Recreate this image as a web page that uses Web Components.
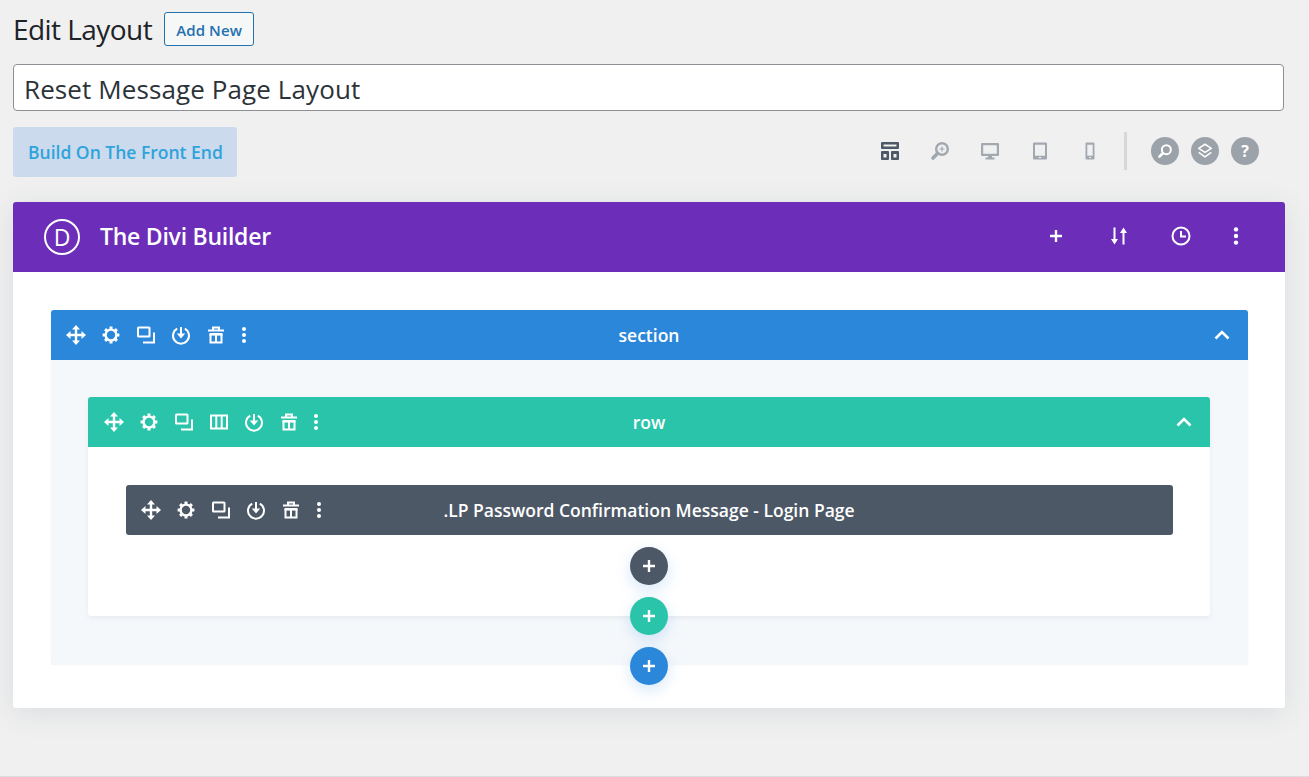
<!DOCTYPE html>
<html>
<head>
<meta charset="utf-8">
<title>Edit Layout</title>
<style>
  html, body { margin: 0; height: 100%; }
  body { background: #f0f0f0; font-family: "Open Sans", "Noto Sans", sans-serif; overflow: hidden; }
</style>
</head>
<body>
<edit-page>
  <edit-title slot="title" label="Edit Layout" action="Add New"></edit-title>
  <title-input slot="title-input" value="Reset Message Page Layout"></title-input>
  <build-toolbar slot="toolbar"></build-toolbar>
  <divi-builder slot="builder">
    <divi-bar kind="section" label="section" icons="move gear copy save trash dots">
      <divi-bar kind="row" label="row" icons="move gear copy cols save trash dots">
        <divi-bar kind="module" label=".LP Password Confirmation Message - Login Page" icons="move gear copy save trash dots"></divi-bar>
        <add-round color="#4c5866"></add-round>
      </divi-bar>
    </divi-bar>
  </divi-builder>
</edit-page>

<script>
const stroke = 'fill="none" stroke="currentColor"';
const ICONS = {
  move: `<g ${stroke} stroke-width="2.400"><path d="M10 3v14M3 10h14"/></g><path fill="currentColor" d="M10 0l4 4.500H6zM10 20l4-4.500H6zM0 10l4.500-4v8zM20 10l-4.500-4v8z"/>`,
  gear: `<g ${stroke}><circle cx="10" cy="10" r="5.400" stroke-width="2.400"/><path stroke-width="3" d="M10 1.600v3M10 15.400v3M1.600 10h3M15.400 10h3M4.100 4.100l2.100 2.100M13.800 13.800l2.100 2.100M4.100 15.900l2.100-2.100M13.800 6.200l2.100-2.100"/></g>`,
  copy: `<g ${stroke} stroke-width="2"><rect x="2" y="2.500" width="11.500" height="9" rx=".5"/><path d="M18 7.500v10H7"/></g>`,
  save: `<g ${stroke} stroke-width="2"><path d="M6.200 3.600a8 8 0 1 0 7.600 0"/><path d="M10 2v8"/></g><path fill="currentColor" d="M5.800 8.600h8.400L10 13.400z"/>`,
  trash: `<g ${stroke} stroke-width="2"><path d="M2 5.500h16M7 4.500V2.500h6v2"/><path stroke-width="2.600" d="M3.500 9.300h13"/><path d="M4.500 9v8.500h11V9M10 10v7"/></g>`,
  dots: `<g fill="currentColor"><circle cx="10" cy="4" r="2"/><circle cx="10" cy="10" r="2"/><circle cx="10" cy="16" r="2"/></g>`,
  cols: `<g ${stroke} stroke-width="2"><rect x="2" y="3.500" width="16" height="13"/><path d="M7.300 3.500v13M12.700 3.500v13"/></g>`,
  plus: `<path ${stroke} stroke-width="2.400" d="M10 4v12M4 10h12"/>`,
  chevron: `<path ${stroke} stroke-width="2.600" d="M3.500 13.500L10 7l6.500 6.500"/>`,
  sort: `<g ${stroke} stroke-width="2"><path d="M5.500 1.500v13M14.500 5.500v13"/></g><path fill="currentColor" d="M2 13h7l-3.500 5.500zM11 7h7l-3.500-5.500z"/>`,
  clock: `<g ${stroke} stroke-width="2"><circle cx="10" cy="10" r="8.500"/><path d="M10 5v5.500h5"/></g>`,
  layout: `<path fill="currentColor" fill-rule="evenodd" d="M1 2a1 1 0 0 1 1-1h16a1 1 0 0 1 1 1v5a1 1 0 0 1-1 1H2a1 1 0 0 1-1-1zM3.500 3.500v2h13v-2zM1 11a1 1 0 0 1 1-1h6a1 1 0 0 1 1 1v7a1 1 0 0 1-1 1H2a1 1 0 0 1-1-1zM3.500 13v3.500h3V13zM11 11a1 1 0 0 1 1-1h6a1 1 0 0 1 1 1v7a1 1 0 0 1-1 1h-6a1 1 0 0 1-1-1zM13.500 13v3.500h3V13z"/>`,
  zoom: `<g ${stroke}><circle cx="12" cy="8" r="5.800" stroke-width="2.400"/><path stroke-width="3.600" stroke-linecap="round" d="M7.500 12.500l-4.500 4.500"/><path stroke-width="1.200" d="M12 5.500v5M9.500 8h5"/></g>`,
  desktop: `<path fill="currentColor" fill-rule="evenodd" d="M1 3a1 1 0 0 1 1-1h16a1 1 0 0 1 1 1v11a1 1 0 0 1-1 1h-6v1.500h2.500V18.500h-9V16.500H8V15H2a1 1 0 0 1-1-1zM3.200 4.200v8.600h13.600V4.200z"/>`,
  tablet: `<path fill="currentColor" fill-rule="evenodd" d="M3 2.500a1 1 0 0 1 1-1h12a1 1 0 0 1 1 1v15a1 1 0 0 1-1 1H4a1 1 0 0 1-1-1zM5 3.700v11.100h10V3.700zM8.700 16h2.600v1H8.700z"/>`,
  phone: `<path fill="currentColor" fill-rule="evenodd" d="M5.500 2.500a1 1 0 0 1 1-1h7a1 1 0 0 1 1 1v15a1 1 0 0 1-1 1h-7a1 1 0 0 1-1-1zM7.300 3.700v11.100h5.400V3.700zM9 16h2v1H9z"/>`,
  search: `<g ${stroke}><circle cx="11.500" cy="8.500" r="5" stroke-width="2.200"/><path stroke-width="3" stroke-linecap="round" d="M7.500 12.500L3.800 16.200"/></g>`,
  layers: `<g ${stroke} stroke-width="1.700" stroke-linejoin="round"><path d="M10 2.500l7 4.500-7 4.500-7-4.500z"/><path d="M3 11.500l7 5 7-5"/></g>`
};

class DiviIcon extends HTMLElement {
  connectedCallback() {
    const size = this.getAttribute('size') || 20;
    const root = this.shadowRoot || this.attachShadow({mode: 'open'});
    root.innerHTML = `
      <style>
        :host { display: block; width: ${size}px; height: ${size}px; line-height: 0; }
        svg { width: 100%; height: 100%; display: block; }
      </style>
      <svg viewBox="0 0 20 20">${ICONS[this.getAttribute('name')]}</svg>`;
  }
}
customElements.define('divi-icon', DiviIcon);

class EditPage extends HTMLElement {
  constructor() {
    super();
    this.attachShadow({mode: 'open'}).innerHTML = `
      <style>
        :host {
          display: flex;
          flex-direction: column;
          box-sizing: border-box;
          height: 777px;
          padding: 12px 24px 0 13px;
          border-bottom: 1px solid #dcdcde;
        }
        ::slotted([slot=title]) { margin-bottom: 18px; }
        ::slotted([slot=title-input]) { margin-bottom: 16px; margin-right: 1px; }
        ::slotted([slot=toolbar]) { margin-bottom: 25px; }
      </style>
      <slot name="title"></slot>
      <slot name="title-input"></slot>
      <slot name="toolbar"></slot>
      <slot name="builder"></slot>`;
  }
}
customElements.define('edit-page', EditPage);

class EditTitle extends HTMLElement {
  constructor() {
    super();
    this.attachShadow({mode: 'open'}).innerHTML = `
      <style>
        :host { display: flex; align-items: center; gap: 11.500px; height: 34px; color: #1d2327; }
        h1 { margin: 0; font: 400 28px/36px "Open Sans", sans-serif; letter-spacing: -.55px; }
        a {
          box-sizing: border-box;
          display: block;
          height: 34px;
          padding: 0 11.500px;
          border: 1px solid #2271b1;
          border-radius: 3px;
          background: #f6f7f7;
          color: #2271b1;
          font: 600 15px/34px "Open Sans", sans-serif;
          letter-spacing: .1px;
        }
      </style>
      <h1>${this.getAttribute('label')}</h1>
      <a>${this.getAttribute('action')}</a>`;
  }
}
customElements.define('edit-title', EditTitle);

class TitleInput extends HTMLElement {
  constructor() {
    super();
    this.attachShadow({mode: 'open'}).innerHTML = `
      <style>
        :host {
          display: block;
          box-sizing: border-box;
          height: 47px;
          padding: 0 10px;
          background: #fff;
          border: 1px solid #8c8f94;
          border-radius: 4px;
          color: #2c3338;
          font: 400 26px/49px "Open Sans", sans-serif;
          letter-spacing: .1px;
        }
      </style>
      ${this.getAttribute('value')}`;
  }
}
customElements.define('title-input', TitleInput);

class BuildToolbar extends HTMLElement {
  constructor() {
    super();
    const icon = (n, c, s) => `<span class="slot" style="color:${c}"><divi-icon name="${n}" size="${s || 20}"></divi-icon></span>`;
    const round = (n, c) => `<span class="round">${c ? `<b>${c}</b>` : `<divi-icon name="${n}" size="18"></divi-icon>`}</span>`;
    this.attachShadow({mode: 'open'}).innerHTML = `
      <style>
        :host { display: flex; align-items: center; height: 50px; }
        .front {
          display: block;
          box-sizing: border-box;
          width: 224px;
          height: 50px;
          padding-left: 15px;
          background: #cbdaec;
          border-radius: 3px;
          color: #2ea3dc;
          font: 600 17.500px/51px "Open Sans", sans-serif;
        }
        .tools { display: flex; align-items: center; margin-left: auto; margin-bottom: 2px; padding-right: 26px; }
        .slot { display: block; width: 50px; display: flex; justify-content: center; }
        .sep { width: 3px; height: 38px; background: #d5d7d9; margin: 0 24px 0 9px; }
        .round {
          display: flex;
          align-items: center;
          justify-content: center;
          width: 28px;
          height: 28px;
          border-radius: 50%;
          background: #9ba2aa;
          color: #fff;
          margin-right: 12px;
        }
        .round:last-child { margin-right: 0; }
        b { font: 700 16px/28px "Open Sans", sans-serif; }
      </style>
      <a class="front">Build On The Front End</a>
      <div class="tools">
        ${icon('layout', '#4c5866')}${icon('zoom', '#a2a8b0')}${icon('desktop', '#a2a8b0')}${icon('tablet', '#a2a8b0')}${icon('phone', '#a2a8b0')}
        <span class="sep"></span>
        ${round('search')}${round('layers')}${round('', '?')}
      </div>`;
  }
}
customElements.define('build-toolbar', BuildToolbar);

class DiviBuilder extends HTMLElement {
  constructor() {
    super();
    this.attachShadow({mode: 'open'}).innerHTML = `
      <style>
        :host {
          display: block;
          background: #fff;
          border-radius: 3px;
          box-shadow: 0 5px 30px rgba(43, 60, 90, .1);
        }
        header {
          display: flex;
          align-items: center;
          height: 70px;
          padding-left: 31px;
          background: #6c2eb9;
          border-radius: 3px 3px 0 0;
          color: #fff;
        }
        .logo {
          box-sizing: border-box;
          width: 36px;
          height: 36px;
          margin-right: 20px;
          border: 2px solid #fff;
          border-radius: 50%;
          text-align: center;
          font: 400 23px/32px "Open Sans", sans-serif;
        }
        h2 { margin: 0 0 2px; font: 600 23px/30px "Open Sans", sans-serif; letter-spacing: -.25px; }
        nav { display: flex; align-items: center; margin-left: auto; margin-bottom: 2px; padding-right: 38px; }
        nav divi-icon:nth-child(1) { margin-right: 43px; }
        nav divi-icon:nth-child(2) { margin-right: 42px; }
        nav divi-icon:nth-child(3) { margin-right: 34px; }
      </style>
      <header>
        <span class="logo">D</span>
        <h2>The Divi Builder</h2>
        <nav>
          <divi-icon name="plus" size="20"></divi-icon>
          <divi-icon name="sort" size="20"></divi-icon>
          <divi-icon name="clock" size="20"></divi-icon>
          <divi-icon name="dots" size="22"></divi-icon>
        </nav>
      </header>
      <main style="padding: 38px 37px 43px 38px"><slot></slot></main>`;
  }
}
customElements.define('divi-builder', DiviBuilder);

const KINDS = {
  section: {bar: '#2b87da', body: '#f5f8fb', pad: '37px 38px 49px 37px', left: 15, dots: -7, add: '#2b87da', drop: 20, center: 20, shadow: '0 0 1px rgba(43, 60, 90, .12)'},
  row: {bar: '#29c4a9', body: '#fff', pad: '38px 37px 31px 38px', left: 16, dots: -8, add: '#29c4a9', drop: 19, center: 19, shadow: '0 2px 5px rgba(43, 60, 90, .07)'},
  module: {bar: '#4c5866', body: 'transparent', pad: '0', left: 15, dots: -7, add: '', drop: 0, center: 0, shadow: 'none'}
};

class DiviBar extends HTMLElement {
  constructor() {
    super();
    const kind = KINDS[this.getAttribute('kind')];
    const isModule = this.getAttribute('kind') === 'module';
    const icons = this.getAttribute('icons').split(' ').map((n) =>
      `<divi-icon name="${n}" size="20"></divi-icon>`).join('');
    this.attachShadow({mode: 'open'}).innerHTML = `
      <style>
        :host {
          display: block;
          position: relative;
          background: ${kind.body};
          border-radius: 3px;
          box-shadow: ${kind.shadow};
        }
        .bar {
          display: grid;
          grid-template-columns: 1fr auto 1fr;
          align-items: center;
          height: 50px;
          padding: 0 16px 0 ${kind.left}px;
          background: ${kind.bar};
          border-radius: ${isModule ? '3px' : '3px 3px 0 0'};
          color: #fff;
        }
        .tools { display: flex; align-items: center; gap: 15px; }
        .tools divi-icon:last-child { margin-left: ${kind.dots}px; }
        .label { font: 600 17.500px/22px "Open Sans", sans-serif; white-space: nowrap; }
        .chev { justify-self: end; }
        .body { padding: ${kind.pad}; }
        add-round.own { position: absolute; left: calc(50% - ${kind.center}px); bottom: -${kind.drop}px; margin: 0; }
      </style>
      <div class="bar">
        <div class="tools">${icons}</div>
        <div class="label">${this.getAttribute('label')}</div>
        ${isModule ? '<span></span>' : '<divi-icon class="chev" name="chevron" size="20"></divi-icon>'}
      </div>
      ${isModule ? '' : `<div class="body"><slot></slot></div><add-round class="own" color="${kind.add}"></add-round>`}`;
  }
}
customElements.define('divi-bar', DiviBar);

class AddRound extends HTMLElement {
  constructor() {
    super();
    this.attachShadow({mode: 'open'}).innerHTML = `
      <style>
        :host {
          display: flex;
          align-items: center;
          justify-content: center;
          width: 38px;
          height: 38px;
          margin: 12px 0 0 calc(50% - 19.500px);
          border-radius: 50%;
          background: ${this.getAttribute('color')};
          color: #fff;
          box-shadow: 0 5px 15px rgba(43, 135, 218, .2);
        }
      </style>
      <divi-icon name="plus" size="20"></divi-icon>`;
  }
}
customElements.define('add-round', AddRound);
</script>
</body>
</html>
